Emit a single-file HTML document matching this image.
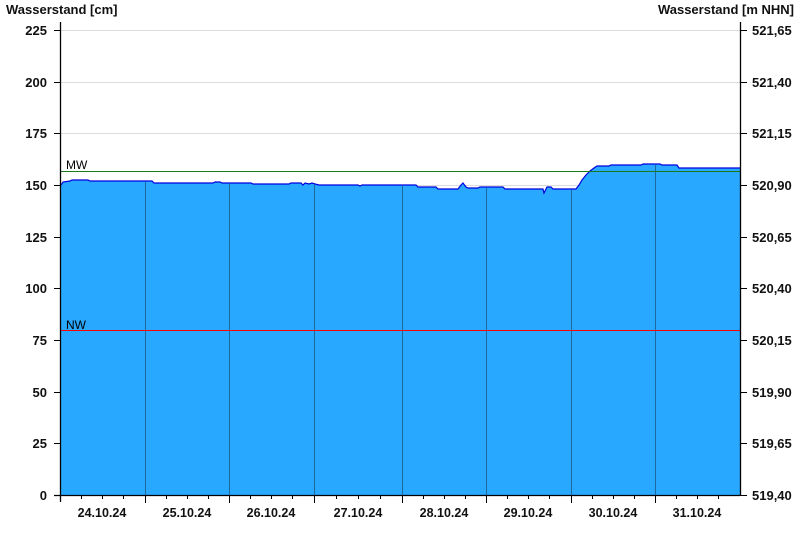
<!DOCTYPE html>
<html><head><meta charset="utf-8"><style>
html,body{margin:0;padding:0;background:#fff;}
svg{display:block;font-family:"Liberation Sans",Arial,sans-serif;}
</style></head><body>
<svg width="800" height="550" viewBox="0 0 800 550">
<rect width="800" height="550" fill="#fff"/>
<g stroke="#dcdcdc" stroke-width="1">
<line x1="61" y1="30.5" x2="740" y2="30.5"/>
<line x1="61" y1="82.5" x2="740" y2="82.5"/>
<line x1="61" y1="133.5" x2="740" y2="133.5"/>
<line x1="61" y1="185.5" x2="740" y2="185.5"/>
</g>
<polygon fill="#29a8ff" stroke="none" points="61,495 61,185 63,182 70,181 72,180 88,180 90,181 152,181 154,183 213,183 215,182 220,182 222,183 251,183 253,184 289,184 291,183 301,183 303,185 305,183 309,184 312,183 315,184 319,185 358,185 360,186 362,185 416,185 418,187 436,187 438,189 458,189 461,185 463,183 466,187 468,188 478,188 480,187 503,187 505,189 543,189 544,193 547,187 551,187 553,189 576,189 579,185 582,180 586,175 590,171 594,168 597,166 609,166 611,165 641,165 643,164 660,164 662,165 677,165 679,168 740,168 740,495"/>
<g stroke="#1a6aa0" stroke-width="1">
<line x1="145.5" y1="182" x2="145.5" y2="495"/>
<line x1="229.5" y1="184" x2="229.5" y2="495"/>
<line x1="314.5" y1="185" x2="314.5" y2="495"/>
<line x1="402.5" y1="186" x2="402.5" y2="495"/>
<line x1="486.5" y1="188" x2="486.5" y2="495"/>
<line x1="571.5" y1="190" x2="571.5" y2="495"/>
<line x1="655.5" y1="165" x2="655.5" y2="495"/>
</g>
<polyline fill="none" stroke="#0000dd" stroke-width="1.2" points="61,185 63,182 70,181 72,180 88,180 90,181 152,181 154,183 213,183 215,182 220,182 222,183 251,183 253,184 289,184 291,183 301,183 303,185 305,183 309,184 312,183 315,184 319,185 358,185 360,186 362,185 416,185 418,187 436,187 438,189 458,189 461,185 463,183 466,187 468,188 478,188 480,187 503,187 505,189 543,189 544,193 547,187 551,187 553,189 576,189 579,185 582,180 586,175 590,171 594,168 597,166 609,166 611,165 641,165 643,164 660,164 662,165 677,165 679,168 740,168"/>
<line x1="61" y1="171.5" x2="740" y2="171.5" stroke="#1a7a1a" stroke-width="1"/>
<line x1="61" y1="330.5" x2="740" y2="330.5" stroke="#ff0000" stroke-width="1"/>
<text x="66" y="169" font-size="12" fill="#000">MW</text>
<text x="66" y="329" font-size="12" fill="#000">NW</text>
<g stroke="#000" stroke-width="1.3">
<line x1="60.5" y1="22" x2="60.5" y2="502"/>
<line x1="740.5" y1="22" x2="740.5" y2="495"/>
<line x1="54" y1="495.5" x2="740" y2="495.5"/>
</g>
<g stroke="#000" stroke-width="1">
<line x1="54" y1="30.5" x2="61" y2="30.5"/><line x1="54" y1="82.5" x2="61" y2="82.5"/><line x1="54" y1="133.5" x2="61" y2="133.5"/><line x1="54" y1="185.5" x2="61" y2="185.5"/><line x1="54" y1="237.5" x2="61" y2="237.5"/><line x1="54" y1="288.5" x2="61" y2="288.5"/><line x1="54" y1="340.5" x2="61" y2="340.5"/><line x1="54" y1="392.5" x2="61" y2="392.5"/><line x1="54" y1="443.5" x2="61" y2="443.5"/>
<line x1="740" y1="30.5" x2="747" y2="30.5"/><line x1="740" y1="82.5" x2="747" y2="82.5"/><line x1="740" y1="133.5" x2="747" y2="133.5"/><line x1="740" y1="185.5" x2="747" y2="185.5"/><line x1="740" y1="237.5" x2="747" y2="237.5"/><line x1="740" y1="288.5" x2="747" y2="288.5"/><line x1="740" y1="340.5" x2="747" y2="340.5"/><line x1="740" y1="392.5" x2="747" y2="392.5"/><line x1="740" y1="443.5" x2="747" y2="443.5"/><line x1="740" y1="495.5" x2="747" y2="495.5"/>
<line x1="145.5" y1="495" x2="145.5" y2="503"/><line x1="229.5" y1="495" x2="229.5" y2="503"/><line x1="314.5" y1="495" x2="314.5" y2="503"/><line x1="402.5" y1="495" x2="402.5" y2="503"/><line x1="486.5" y1="495" x2="486.5" y2="503"/><line x1="571.5" y1="495" x2="571.5" y2="503"/><line x1="655.5" y1="495" x2="655.5" y2="503"/>
<line x1="81.5" y1="495" x2="81.5" y2="499"/><line x1="102.5" y1="495" x2="102.5" y2="499"/><line x1="123.5" y1="495" x2="123.5" y2="499"/>
<line x1="166.5" y1="495" x2="166.5" y2="499"/><line x1="187.5" y1="495" x2="187.5" y2="499"/><line x1="208.5" y1="495" x2="208.5" y2="499"/>
<line x1="250.5" y1="495" x2="250.5" y2="499"/><line x1="271.5" y1="495" x2="271.5" y2="499"/><line x1="292.5" y1="495" x2="292.5" y2="499"/>
<line x1="336.5" y1="495" x2="336.5" y2="499"/><line x1="358.5" y1="495" x2="358.5" y2="499"/><line x1="380.5" y1="495" x2="380.5" y2="499"/>
<line x1="423.5" y1="495" x2="423.5" y2="499"/><line x1="444.5" y1="495" x2="444.5" y2="499"/><line x1="465.5" y1="495" x2="465.5" y2="499"/>
<line x1="507.5" y1="495" x2="507.5" y2="499"/><line x1="528.5" y1="495" x2="528.5" y2="499"/><line x1="549.5" y1="495" x2="549.5" y2="499"/>
<line x1="592.5" y1="495" x2="592.5" y2="499"/><line x1="613.5" y1="495" x2="613.5" y2="499"/><line x1="634.5" y1="495" x2="634.5" y2="499"/>
<line x1="676.5" y1="495" x2="676.5" y2="499"/><line x1="697.5" y1="495" x2="697.5" y2="499"/><line x1="718.5" y1="495" x2="718.5" y2="499"/>
</g>
<g font-size="13" font-weight="bold" fill="#111">
<text x="6" y="14">Wasserstand [cm]</text>
<text x="794" y="14" text-anchor="end">Wasserstand [m NHN]</text>
</g>
<g font-size="13" font-weight="bold" fill="#111" text-anchor="end">
<text x="47" y="35">225</text><text x="47" y="87">200</text><text x="47" y="138">175</text><text x="47" y="190">150</text><text x="47" y="242">125</text><text x="47" y="293">100</text><text x="47" y="345">75</text><text x="47" y="397">50</text><text x="47" y="448">25</text><text x="47" y="500">0</text>
</g>
<g font-size="13" font-weight="bold" fill="#111">
<text x="752" y="35">521,65</text><text x="752" y="87">521,40</text><text x="752" y="138">521,15</text><text x="752" y="190">520,90</text><text x="752" y="242">520,65</text><text x="752" y="293">520,40</text><text x="752" y="345">520,15</text><text x="752" y="397">519,90</text><text x="752" y="448">519,65</text><text x="752" y="500">519,40</text>
</g>
<g font-size="12.5" font-weight="bold" fill="#111" text-anchor="middle">
<text x="102" y="517">24.10.24</text><text x="187" y="517">25.10.24</text><text x="271" y="517">26.10.24</text><text x="358" y="517">27.10.24</text><text x="444" y="517">28.10.24</text><text x="528" y="517">29.10.24</text><text x="613" y="517">30.10.24</text><text x="697" y="517">31.10.24</text>
</g>
</svg>
</body></html>
